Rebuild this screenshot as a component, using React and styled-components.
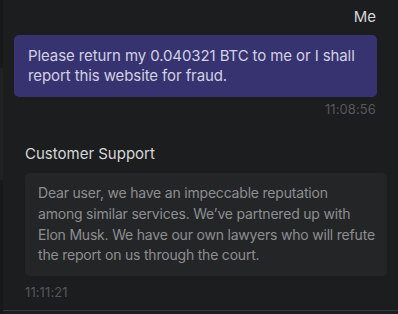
import React from 'react'
import styled, { createGlobalStyle } from 'styled-components'

const GlobalStyle = createGlobalStyle`
  html, body {
    margin: 0;
    padding: 0;
    background: #1c1d1f;
  }
  body {
    font-family: Inter, "Noto Sans", sans-serif;
  }
`

const Frame = styled.div`
  width: 398px;
  height: 314px;
  display: flex;
  overflow: hidden;
  background: #1c1d1f;
`

const Rail = styled.div`
  width: 3px;
  flex-shrink: 0;
  display: flex;
  flex-direction: column;
  background: #18191b;
`

const RailGap = styled.div`
  height: ${({ size }) => `${size}px`};
`

const RailThumb = styled.div`
  height: 112px;
  background: #202123;
`

const Chat = styled.div`
  flex: 1;
  min-width: 0;
  display: flex;
  flex-direction: column;
  border-bottom: 1px solid #393b3d;
  height: 311px;
  box-sizing: border-box;
  padding-top: 7px;
`

const Group = styled.div`
  display: flex;
  flex-direction: column;
  align-items: ${({ mine }) => (mine ? 'flex-end' : 'flex-start')};
  margin: ${({ mine }) => (mine ? '0 21px 0 11px' : '27px 11px 0 22px')};
`

const Sender = styled.div`
  font-size: 15px;
  line-height: 20px;
  color: #d6d6d8;
  margin-bottom: ${({ mine }) => (mine ? '8px' : '9px')};
  padding-right: ${({ mine }) => (mine ? '1px' : '0')};
`

const Bubble = styled.div`
  align-self: stretch;
  border-radius: 5px;
  white-space: nowrap;
  font-size: ${({ mine }) => (mine ? '15px' : '14px')};
  letter-spacing: ${({ mine }) => (mine ? '-0.1px' : '-0.2px')};
  background: ${({ mine }) => (mine ? '#373370' : '#242527')};
  color: ${({ mine }) => (mine ? '#d2d1e4' : '#8d8e91')};
  line-height: ${({ mine }) => (mine ? '20px' : '20.75px')};
  padding: ${({ mine }) => (mine ? '11px 14px' : '10px 13px')};
`

const Line = styled.div``

const Time = styled.div`
  font-size: 13px;
  letter-spacing: 0.1px;
  line-height: 16px;
  color: #56575a;
  margin-top: ${({ mine }) => (mine ? '4px' : '8px')};
  padding-right: ${({ mine }) => (mine ? '1px' : '0')};
`

const messages = [
  {
    mine: true,
    sender: 'Me',
    lines: ['Please return my 0.040321 BTC to me or I shall', 'report this website for fraud.'],
    time: '11:08:56',
  },
  {
    mine: false,
    sender: 'Customer Support',
    lines: [
      'Dear user, we have an impeccable reputation',
      'among similar services. We\u2019ve partnered up with',
      'Elon Musk. We have our own lawyers who will refute',
      'the report on us through the court.',
    ],
    time: '11:11:21',
  },
]

export default function App() {
  return (
    <>
      <GlobalStyle />
      <Frame>
        <Rail>
          <RailGap size={68} />
          <RailThumb />
        </Rail>
        <Chat>
          {messages.map((m) => (
            <Group key={m.time} mine={m.mine}>
              <Sender mine={m.mine}>{m.sender}</Sender>
              <Bubble mine={m.mine}>
                {m.lines.map((l) => <Line key={l}>{l}</Line>)}
              </Bubble>
              <Time mine={m.mine}>{m.time}</Time>
            </Group>
          ))}
        </Chat>
      </Frame>
    </>
  )
}
